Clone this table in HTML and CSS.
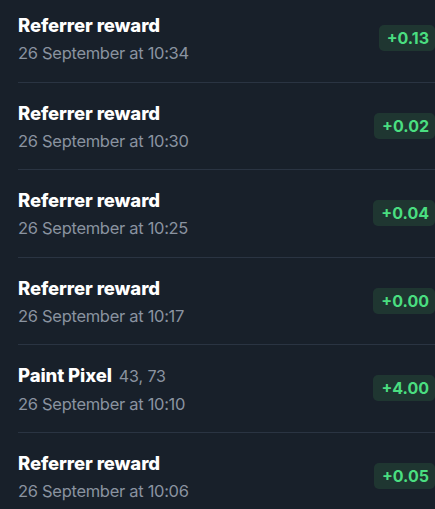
FILE: index.html
```html
<!DOCTYPE html>
<html>
<head>
<meta charset="utf-8">
<link rel="stylesheet" href="styles.css">
</head>
<body>
<div class="list">
  <div class="row first">
    <div class="info"><div class="title">Referrer reward</div><div class="date">26 September at 10:34</div></div>
    <div class="badge">+0.13</div>
  </div>
  <div class="row">
    <div class="info"><div class="title">Referrer reward</div><div class="date">26 September at 10:30</div></div>
    <div class="badge">+0.02</div>
  </div>
  <div class="row">
    <div class="info"><div class="title">Referrer reward</div><div class="date">26 September at 10:25</div></div>
    <div class="badge">+0.04</div>
  </div>
  <div class="row">
    <div class="info"><div class="title">Referrer reward</div><div class="date">26 September at 10:17</div></div>
    <div class="badge">+0.00</div>
  </div>
  <div class="row">
    <div class="info"><div class="title">Paint Pixel <span class="coords">43, 73</span></div><div class="date">26 September at 10:10</div></div>
    <div class="badge">+4.00</div>
  </div>
  <div class="row">
    <div class="info"><div class="title">Referrer reward</div><div class="date">26 September at 10:06</div></div>
    <div class="badge">+0.05</div>
  </div>
</div>
</body>
</html>
```
FILE: styles.css
```css
html, body {
  margin: 0;
  padding: 0;
  background: #18202a;
  overflow: hidden;
}
body {
  font-family: Inter, "Open Sans", sans-serif;
  width: 435px;
  height: 509px;
}
.list {
  display: flex;
  flex-direction: column;
  margin-top: -5px;
  padding-left: 18px;
}
.row {
  display: flex;
  align-items: center;
  justify-content: space-between;
  height: 87.5px;
  box-sizing: border-box;
  border-bottom: 1px solid #2a3442;
}
.info {
  display: flex;
  flex-direction: column;
  gap: 7px;
  padding-top: 2px;
}
.title {
  color: #ffffff;
  font-weight: 800;
  font-size: 18.5px;
  line-height: 21px;
  letter-spacing: -0.1px;
}
.coords {
  color: #8a93a0;
  font-weight: 400;
  font-size: 16px;
  margin-left: 3px;
}
.date {
  color: #8a93a0;
  font-size: 16.5px;
  line-height: 20px;
  letter-spacing: -0.3px;
}
.badge {
  background: #1f3631;
  color: #4ade80;
  font-weight: 700;
  font-size: 16px;
  line-height: 26px;
  padding: 0 6px 0 8px;
  border-radius: 5px;
}
```
